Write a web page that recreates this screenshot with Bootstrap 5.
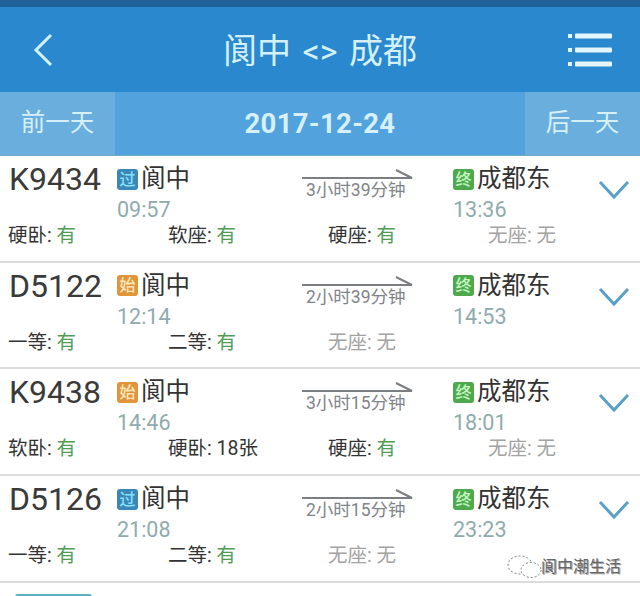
<!DOCTYPE html>
<html lang="zh">
<head>
  <meta charset="UTF-8">
  <title>阆中 &lt;&gt; 成都</title>
  <meta name="viewport" content="width=device-width, initial-scale=1.0">
  <link href="https://cdn.jsdelivr.net/npm/bootstrap@5.3.0/dist/css/bootstrap.min.css" rel="stylesheet">
  <style>
    html, body { height: 596px; overflow: hidden; }
    body { font-family: Roboto, "Noto Sans CJK SC", sans-serif; background: #fff; color: #333; position: relative; }
    .status-strip { height: 7px; background: #1f6299; }
    .title-bar { height: 85px; background: #2a88cf; color: #d3f0f8; }
    .title-side { width: 110px; }
    .back-side { padding-left: 33px; }
    .menu-side { padding-right: 28px; }
    .title-text { font-size: 34px; line-height: 1; word-spacing: 3px; padding-top: 3px; }
    .date-bar { height: 64px; background: #52a2dd; color: #d6f0f8; border-bottom: 1px solid #6fa9cc; }
    .date-side { width: 115px; background: #6aaede; font-size: 24.5px; }
    .date-now { font-size: 27.5px; font-weight: 700; letter-spacing: .3px; }
    .train-row { height: 106.7px; border-bottom: 2px solid #dcdcdc; }
    .train-top { height: 68px; }
    .train-no { width: 117px; padding: 3px 0 0 9px; font-size: 32px; line-height: 40px; color: #3a3a3a; }
    .stop-from { width: 185px; }
    .trip { width: 151px; padding-top: 12px; }
    .stop-to { width: 136px; }
    .stop-name { font-size: 24.5px; line-height: 30px; color: #333; padding-top: 8px; }
    .stop-tag { width: 21px; height: 21px; border-radius: 3px; font-size: 16px; font-weight: 500; line-height: 21px; text-align: center; margin: 0 3px 0 0; }
    .tag-pass { background: #3a87b8; color: #86e2ff; }
    .tag-start { background: #e0953c; color: #ffe6b8; }
    .tag-end { background: #4ea84e; color: #c4f7c0; }
    .stop-time { font-size: 21.5px; line-height: 26px; color: #8fabad; margin-top: 3px; }
    .trip-arrow { display: block; width: 112px; height: 12px; }
    .trip-len { font-size: 17.5px; line-height: 20px; color: #7f8488; padding-left: 4px; }
    .seat-cell { padding-left: 8px; font-size: 19.5px; line-height: 24px; color: #333; }
    .seat-yes { color: #4f9d56; }
    .seat-none { color: #a3a3a3; }
    .chevron-icon { width: 32px; height: 20px; margin: 24px 0 0 9px; }
    .next-tag { width: 77px; height: 14px; margin: 11px 0 0 15px; border-top: 2px solid #5fb0c4; border-radius: 3px 3px 0 0; }
    .mark-wrap { position: absolute; left: 507px; top: 555px; }
    .mark-text { font-size: 16px; line-height: 24px; color: #666; text-shadow: 1px 1px 0 #aaa; margin-left: -2px; }
  </style>
</head>

<body>
  <div class="status-strip"></div>
  <div class="title-bar d-flex align-items-center justify-content-between">
    <div class="title-side back-side d-flex">
      <svg width="20" height="34" viewBox="0 0 20 34" fill="none" stroke="#d3f0f8" stroke-width="3"><path d="M18 2 3 17l15 15"/></svg>
    </div>
    <div class="title-text">阆中 &lt;&gt; 成都</div>
    <div class="title-side menu-side d-flex justify-content-end">
      <svg width="44" height="36" viewBox="0 0 44 36" fill="#e4f6fb">
        <rect x="0" y="2" width="4" height="4"/><rect x="7" y="1.500" width="37" height="5" rx="1"/>
        <rect x="0" y="16" width="4" height="4"/><rect x="7" y="15.500" width="37" height="5" rx="1"/>
        <rect x="0" y="30" width="4" height="4"/><rect x="7" y="29.500" width="37" height="5" rx="1"/>
      </svg>
    </div>
  </div>
  <div class="date-bar d-flex">
    <div class="date-side d-flex align-items-center justify-content-center">前一天</div>
    <div class="date-now flex-grow-1 d-flex align-items-center justify-content-center">2017-12-24</div>
    <div class="date-side d-flex align-items-center justify-content-center">后一天</div>
  </div>

  <div class="train-row">
    <div class="train-top d-flex">
      <div class="train-no">K9434</div>
      <div class="stop-from">
        <div class="stop-name d-flex align-items-center"><span class="stop-tag tag-pass">过</span>阆中</div>
        <div class="stop-time">09:57</div>
      </div>
      <div class="trip">
        <svg class="trip-arrow" viewBox="0 0 112 12" fill="none" stroke="#7b7f82" stroke-width="2"><path d="M0 10h110L94 2"/></svg>
        <div class="trip-len">3小时39分钟</div>
      </div>
      <div class="stop-to">
        <div class="stop-name d-flex align-items-center"><span class="stop-tag tag-end">终</span>成都东</div>
        <div class="stop-time">13:36</div>
      </div>
      <svg class="chevron-icon" viewBox="0 0 32 20" fill="none" stroke="#5a9fc4" stroke-width="3"><path d="M2 2l14 15L30 2"/></svg>
    </div>
    <div class="row g-0">
      <div class="col-3 seat-cell">硬卧: <span class="seat-yes">有</span></div>
      <div class="col-3 seat-cell">软座: <span class="seat-yes">有</span></div>
      <div class="col-3 seat-cell">硬座: <span class="seat-yes">有</span></div>
      <div class="col-3 seat-cell seat-none">无座: 无</div>
    </div>
  </div>

  <div class="train-row">
    <div class="train-top d-flex">
      <div class="train-no">D5122</div>
      <div class="stop-from">
        <div class="stop-name d-flex align-items-center"><span class="stop-tag tag-start">始</span>阆中</div>
        <div class="stop-time">12:14</div>
      </div>
      <div class="trip">
        <svg class="trip-arrow" viewBox="0 0 112 12" fill="none" stroke="#7b7f82" stroke-width="2"><path d="M0 10h110L94 2"/></svg>
        <div class="trip-len">2小时39分钟</div>
      </div>
      <div class="stop-to">
        <div class="stop-name d-flex align-items-center"><span class="stop-tag tag-end">终</span>成都东</div>
        <div class="stop-time">14:53</div>
      </div>
      <svg class="chevron-icon" viewBox="0 0 32 20" fill="none" stroke="#5a9fc4" stroke-width="3"><path d="M2 2l14 15L30 2"/></svg>
    </div>
    <div class="row g-0">
      <div class="col-3 seat-cell">一等: <span class="seat-yes">有</span></div>
      <div class="col-3 seat-cell">二等: <span class="seat-yes">有</span></div>
      <div class="col-3 seat-cell seat-none">无座: 无</div>
    </div>
  </div>

  <div class="train-row">
    <div class="train-top d-flex">
      <div class="train-no">K9438</div>
      <div class="stop-from">
        <div class="stop-name d-flex align-items-center"><span class="stop-tag tag-start">始</span>阆中</div>
        <div class="stop-time">14:46</div>
      </div>
      <div class="trip">
        <svg class="trip-arrow" viewBox="0 0 112 12" fill="none" stroke="#7b7f82" stroke-width="2"><path d="M0 10h110L94 2"/></svg>
        <div class="trip-len">3小时15分钟</div>
      </div>
      <div class="stop-to">
        <div class="stop-name d-flex align-items-center"><span class="stop-tag tag-end">终</span>成都东</div>
        <div class="stop-time">18:01</div>
      </div>
      <svg class="chevron-icon" viewBox="0 0 32 20" fill="none" stroke="#5a9fc4" stroke-width="3"><path d="M2 2l14 15L30 2"/></svg>
    </div>
    <div class="row g-0">
      <div class="col-3 seat-cell">软卧: <span class="seat-yes">有</span></div>
      <div class="col-3 seat-cell">硬卧: 18张</div>
      <div class="col-3 seat-cell">硬座: <span class="seat-yes">有</span></div>
      <div class="col-3 seat-cell seat-none">无座: 无</div>
    </div>
  </div>

  <div class="train-row">
    <div class="train-top d-flex">
      <div class="train-no">D5126</div>
      <div class="stop-from">
        <div class="stop-name d-flex align-items-center"><span class="stop-tag tag-pass">过</span>阆中</div>
        <div class="stop-time">21:08</div>
      </div>
      <div class="trip">
        <svg class="trip-arrow" viewBox="0 0 112 12" fill="none" stroke="#7b7f82" stroke-width="2"><path d="M0 10h110L94 2"/></svg>
        <div class="trip-len">2小时15分钟</div>
      </div>
      <div class="stop-to">
        <div class="stop-name d-flex align-items-center"><span class="stop-tag tag-end">终</span>成都东</div>
        <div class="stop-time">23:23</div>
      </div>
      <svg class="chevron-icon" viewBox="0 0 32 20" fill="none" stroke="#5a9fc4" stroke-width="3"><path d="M2 2l14 15L30 2"/></svg>
    </div>
    <div class="row g-0">
      <div class="col-3 seat-cell">一等: <span class="seat-yes">有</span></div>
      <div class="col-3 seat-cell">二等: <span class="seat-yes">有</span></div>
      <div class="col-3 seat-cell seat-none">无座: 无</div>
    </div>
  </div>

  <div class="next-tag"></div>

  <div class="mark-wrap d-flex align-items-center">
    <svg width="36" height="24" viewBox="0 0 36 24" fill="#fff" stroke="#777" stroke-width="1" stroke-dasharray="2 2">
      <ellipse cx="13" cy="10" rx="12" ry="9"/>
      <ellipse cx="24" cy="15" rx="10" ry="7.500"/>
    </svg>
    <span class="mark-text">阆中潮生活</span>
  </div>
</body>
</html>
